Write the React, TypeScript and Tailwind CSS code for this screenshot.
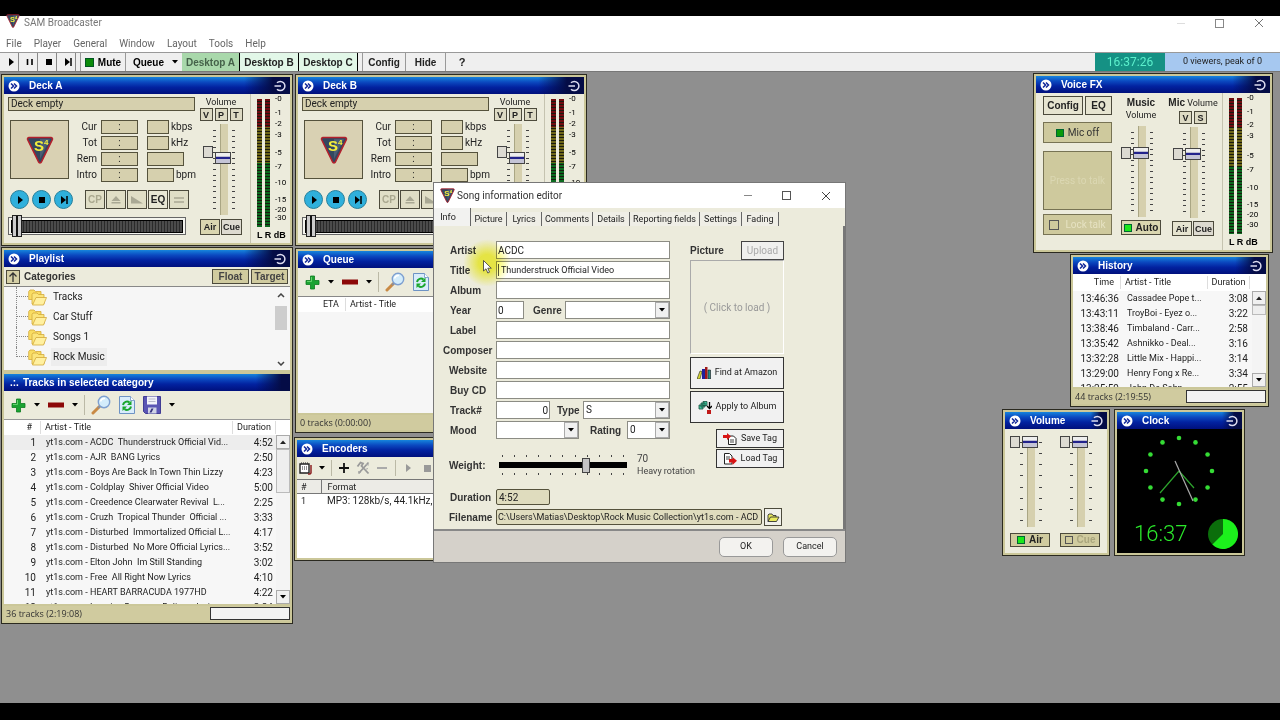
import type {ReactNode} from 'react';
import clsx from 'clsx';

type Children = {children?: ReactNode};

const tracks = [
  ['yt1s.com - ACDC  Thunderstruck Official Vid...', '4:52'],
  ['yt1s.com - AJR  BANG Lyrics', '2:50'],
  ['yt1s.com - Boys Are Back In Town Thin Lizzy', '4:23'],
  ['yt1s.com - Coldplay  Shiver Official Video', '5:00'],
  ['yt1s.com - Creedence Clearwater Revival  L...', '2:25'],
  ['yt1s.com - Cruzh  Tropical Thunder  Official ...', '3:33'],
  ['yt1s.com - Disturbed  Immortalized Official L...', '4:17'],
  ['yt1s.com - Disturbed  No More Official Lyrics...', '3:52'],
  ['yt1s.com - Elton John  Im Still Standing', '3:02'],
  ['yt1s.com - Free  All Right Now Lyrics', '4:10'],
  ['yt1s.com - HEART BARRACUDA 1977HD', '4:22'],
  ['yt1s.com - Imagine Dragons  Believer Lyrics', '3:24'],
];

const history = [
  ['13:46:36', 'Cassadee Pope t...', '3:08'],
  ['13:43:11', 'TroyBoi - Eyez o...', '3:22'],
  ['13:38:46', 'Timbaland - Carr...', '2:58'],
  ['13:35:42', 'Ashnikko - Deal...', '3:16'],
  ['13:32:28', 'Little Mix - Happi...', '3:14'],
  ['13:29:00', 'Henry Fong x Re...', '3:34'],
  ['13:25:59', 'John De Sohn...', '2:55'],
];

// [label, share of the scale below it]
const dbScale: Array<[string, number]> = [
  ['-0', 14], ['-1', 12], ['-2', 11], ['-3', 19], ['-5', 14], ['-7', 17], ['-10', 17], ['-15', 10], ['-20', 9], ['-30', 9],
];

function Logo({className}: {className: string}) {
  return (
    <svg viewBox="0 0 28 28" className={className} aria-hidden="true">
      <path d="M3 1.5h22a1.5 1.5 0 0 1 1.4 2L15.4 26a1.5 1.5 0 0 1-2.8 0L1.6 3.5A1.5 1.5 0 0 1 3 1.5Z" fill="#33475f" stroke="#b3202c" strokeWidth="1.6" />
      <path d="M14 3h10L14 23Z" fill="#5b6f86" opacity=".55" />
      <text x="8" y="15" fontSize="15" fontWeight="700" fill="#f4ee3c" fontFamily="Liberation Sans, sans-serif">S</text>
      <text x="18" y="9" fontSize="8" fontWeight="700" fill="#f4ee3c" fontFamily="Liberation Sans, sans-serif">4</text>
    </svg>
  );
}

function Caret({className = 'text-black'}: {className?: string}) {
  return (
    <svg viewBox="0 0 6 4" className={clsx('h-1 w-1.5 shrink-0', className)} aria-hidden="true">
      <path d="M0 0h6L3 3.6Z" fill="currentColor" />
    </svg>
  );
}

function PlusIcon() {
  return (
    <svg viewBox="0 0 15 15" className="size-[15px]" aria-hidden="true">
      <path d="M5.5 1h4v4.5H14v4H9.500V14h-4V9.500H1v-4h4.500Z" fill="#1ba332" stroke="#0c7c20" strokeWidth=".8" />
      <path d="M6.500 2v4.500H2" fill="none" stroke="#63d36c" />
    </svg>
  );
}

function MinusIcon() {
  return (
    <svg viewBox="0 0 16 6" className="h-1.5 w-4" aria-hidden="true">
      <path d="M0 .5h16v5H0Z" fill="#8c0808" />
    </svg>
  );
}

function SearchIcon() {
  return (
    <svg viewBox="0 0 20 20" className="size-5" aria-hidden="true">
      <path d="M8.500 11.500 2 18" stroke="#c98a45" strokeWidth="3" strokeLinecap="round" />
      <path d="M9.500 10.500 7 13" stroke="#8b8f9c" strokeWidth="2" />
      <circle cx="13" cy="7" r="5.700" fill="#d3ecfb" stroke="#7d9fd0" strokeWidth="1.400" />
      <path d="M9.500 6.500A4 4 0 0 1 14 3.500" stroke="#fff" strokeWidth="1.500" fill="none" />
    </svg>
  );
}

function RefreshIcon() {
  return (
    <svg viewBox="0 0 16 18" className="h-[18px] w-4" aria-hidden="true">
      <path d="M.5.500h11l4 4v13H.500Z" fill="#d9ecfb" stroke="#6e93c4" />
      <path d="M11.500.500v4h4" fill="#fff" stroke="#6e93c4" strokeWidth=".8" />
      <path d="M4 9a4 4 0 0 1 6.500-2.500" fill="none" stroke="#19a62c" strokeWidth="2" />
      <path d="M12.500 4.500v4.500H8Z" fill="#19a62c" />
      <path d="M12 10.500A4 4 0 0 1 5.500 13" fill="none" stroke="#19a62c" strokeWidth="2" />
      <path d="M3.500 15v-4.500H8Z" fill="#19a62c" />
    </svg>
  );
}

function SaveIcon() {
  return (
    <svg viewBox="0 0 18 18" className="size-[18px]" aria-hidden="true">
      <path d="M.5.500h17v17H2.500l-2-2Z" fill="#5a55b4" stroke="#413c94" />
      <path d="M4 .5h10v8H4Z" fill="#f3f3fa" />
      <path d="M5.500 3h7M5.500 5.500h7" stroke="#b9b9cc" />
      <path d="M5 11.500h8.500v6H5Z" fill="#cfd3e6" />
      <path d="M10.500 12.500h-2l-2 4h2Z" fill="#34307c" />
    </svg>
  );
}

function FolderIcon() {
  return (
    <svg viewBox="0 0 19 17" className="h-[17px] w-[19px]" aria-hidden="true">
      <path d="M.7 2.500 2 1h4l1.500 1.500H13v8H.7Z" fill="#f9dd62" stroke="#d3a93a" strokeWidth=".8" />
      <path d="M4 5.500 5 4h4l1.500 1.500h5.500V15H4Z" fill="#fbe57c" stroke="#d3a93a" strokeWidth=".8" />
      <path d="M4.500 16 8 8.500h10.500L15.500 16Z" fill="#fff0a0" stroke="#d3a93a" strokeWidth=".8" />
    </svg>
  );
}

function PlayShape() {
  return <svg viewBox="0 0 10 10" className="size-2.5" aria-hidden="true"><path d="M3 1v8l5-4Z" fill="#000" /></svg>;
}
function PauseShape() {
  return <svg viewBox="0 0 10 10" className="size-2.5" aria-hidden="true"><path d="M2.500 2v6M7 2v6" stroke="#000" strokeWidth="1.600" /></svg>;
}
function StopShape() {
  return <svg viewBox="0 0 10 10" className="size-2.5" aria-hidden="true"><path d="M2 2h6v6H2Z" fill="#000" /></svg>;
}
function NextShape() {
  return <svg viewBox="0 0 10 10" className="size-2.5" aria-hidden="true"><path d="M2 1v8l5-4Z" fill="#000" /><path d="M8 1v8" stroke="#000" strokeWidth="1.500" /></svg>;
}

function TitleBar({title}: {title: string}) {
  return (
    <header className="flex h-[17px] shrink-0 items-center bg-[linear-gradient(90deg,transparent_84%,#040c46_94%),linear-gradient(180deg,#1684dc,#0b49c0_30%,#0222a0_60%,#00107c)] px-1 text-white">
      <svg viewBox="0 0 12 12" className="size-3" aria-hidden="true">
        <circle cx="6" cy="6" r="5.500" fill="#fff" />
        <path d="m3 3.500 2.500 2.500L3 8.500M6 3.500 8.500 6 6 8.500" fill="none" stroke="#12289a" strokeWidth="1.500" />
      </svg>
      <h2 className="ml-[9px] flex-1 font-['Liberation_Sans',sans-serif] text-[10px] leading-4 font-bold">{title}</h2>
      <button aria-label={`Dock ${title}`}>
        <svg viewBox="0 0 12 12" className="size-3 text-[#dcdcf0]" aria-hidden="true">
          <path d="M3 2.800a4.600 4.600 0 1 1 0 6.400M.5 6H7" fill="none" stroke="currentColor" strokeWidth="1.500" />
        </svg>
      </button>
    </header>
  );
}

function Panel({title, className, children}: Children & {title: string; className: string}) {
  return (
    <section className={clsx('absolute flex flex-col border border-[#2b2a20] bg-[#cbc799] p-0.5', className)}>
      <TitleBar title={title} />
      {children}
    </section>
  );
}

function Btn({children, className, label}: Children & {className?: string; label?: string}) {
  return (
    <button
      aria-label={label}
      className={clsx("flex shrink-0 items-center justify-center border border-[#4c4a3c] font-['Liberation_Sans',sans-serif] leading-3 font-bold", className)}
    >
      {children}
    </button>
  );
}

function Ticks({count}: {count: number}) {
  return (
    <div className="flex w-[3px] flex-col justify-between py-1.5">
      {Array.from({length: count}, (_, i) => <span key={i} className="h-px bg-[#444]" />)}
    </div>
  );
}

function VSlider({label, value, ticks = 15, knob}: {label: string; value: number; ticks?: number; knob: string}) {
  return (
    <div className="flex h-[91px] gap-1">
      <button aria-label={`Reset ${label}`} className={clsx('-mr-1 h-3 w-2.5 border border-[#444] bg-[#dcdad2]', knob)} />
      <Ticks count={ticks} />
      <input
        type="range"
        aria-label={label}
        defaultValue={value}
        className="relative h-full w-2 appearance-none border-l border-[#aaa684] bg-[#d6d0ae] [direction:rtl] [writing-mode:vertical-lr] [&::-webkit-slider-thumb]:-ml-1 [&::-webkit-slider-thumb]:h-3 [&::-webkit-slider-thumb]:w-4 [&::-webkit-slider-thumb]:appearance-none [&::-webkit-slider-thumb]:border [&::-webkit-slider-thumb]:border-[#444] [&::-webkit-slider-thumb]:bg-[linear-gradient(180deg,#eee_0_3px,#bcbcd0_3px_4px,#22228c_4px_6px,#c4c4d6_6px)]"
      />
      <Ticks count={ticks} />
    </div>
  );
}

function Meter() {
  return (
    <div className="flex w-10 shrink-0 flex-col border-l border-[#c5c3b0] pt-[5px] pl-1.5 text-black">
      <div className="flex flex-1 gap-[3px]">
        {['L', 'R'].map((ch) => (
          <div key={ch} className="w-[5px] bg-[repeating-linear-gradient(180deg,transparent_0_2px,#1a1a10_2px_3px),linear-gradient(180deg,#700c10_0_22%,#6e6618_22%_50%,#0c6a20_50%)]" />
        ))}
        <div className="ml-0.5 flex flex-col text-[8px] leading-none">
          {dbScale.map(([text, share]) => (
            <span key={text} className="h-0" style={{flexGrow: share}}><span className="block -translate-y-1">{text}</span></span>
          ))}
        </div>
      </div>
      <div className="mt-0.5 mb-0.5 font-['Liberation_Sans',sans-serif] text-[9px] leading-3 font-bold whitespace-nowrap">L R dB</div>
    </div>
  );
}

function Field({className, children}: Children & {className: string}) {
  return <span className={clsx('flex h-3.5 items-center justify-center border border-[#55523c] bg-[#d6d0ae]', className)}>{children}</span>;
}

function Deck({name, className}: {name: string; className: string}) {
  const rows: Array<[string, string, string]> = [
    ['Cur', 'w-[22px]', 'kbps'],
    ['Tot', 'w-[22px]', 'kHz'],
    ['Rem', 'w-[37px]', ''],
    ['Intro', 'w-[27px]', 'bpm'],
  ];
  return (
    <Panel title={name} className={clsx('h-[172px] w-[292px]', className)}>
      <div className="flex flex-1 bg-[#ecebdc] text-[#222]">
        <div className="flex w-48 flex-col pt-[3px] pl-1">
          <div className="h-3.5 w-[187px] border border-[#55523c] bg-[#d6d0ae] px-0.5 text-[10px] leading-3">Deck empty</div>
          <div className="mt-[9px] flex pl-0.5">
            <div className="flex size-[59px] items-center justify-center border border-[#55523c] bg-[#d9d1b3]">
              <Logo className="size-7" />
            </div>
            <div className="flex flex-1 flex-col gap-0.5">
              {rows.map(([label, width, unit]) => (
                <div key={label} className="flex items-center text-[10px] leading-3">
                  <span className="mr-1 w-7 text-right">{label}</span>
                  <Field className="mr-[9px] w-[37px]">:</Field>
                  <Field className={width} />
                  <span className="ml-0.5">{unit}</span>
                </div>
              ))}
            </div>
          </div>
          <div className="mt-2 flex items-center gap-[3px] pl-0.5">
            {[PlayShape, StopShape, NextShape].map((Shape, i) => (
              <button key={i} aria-label={['Play', 'Stop', 'Next'][i]} className="flex size-[19px] items-center justify-center rounded-full border border-[#26809c] bg-[#2fb0dc]">
                <Shape />
              </button>
            ))}
            <div className="ml-[9px] flex gap-px">
              <Btn className="h-[19px] w-5 bg-[#e0dec6] text-[10px] text-[#aaa88f]">CP</Btn>
              <Btn label="Eject" className="h-[19px] w-5 bg-[#e0dec6]">
                <svg viewBox="0 0 10 8" className="h-2 w-2.5"><path d="M5 0 9.500 5h-9ZM.5 6h9v1.500h-9Z" fill="#a9a894" /></svg>
              </Btn>
              <Btn label="Fade" className="h-[19px] w-5 bg-[#e0dec6]">
                <svg viewBox="0 0 12 8" className="h-2 w-3"><path d="M0 0l12 7.500H0Z" fill="#a9a894" /></svg>
              </Btn>
              <Btn className="h-[19px] w-5 bg-[#e8e7d4] text-[10px]">EQ</Btn>
              <Btn label="Sync" className="h-[19px] w-5 bg-[#e0dec6]">
                <svg viewBox="0 0 10 6" className="h-1.5 w-2.5"><path d="M0 1h10M0 5h10" stroke="#a9a894" strokeWidth="1.600" /></svg>
              </Btn>
            </div>
          </div>
          <div className="mt-2 flex h-[18px] w-[178px] items-center border border-[#666] bg-[#f4f4ee] px-0.5">
            <input
              type="range"
              aria-label={`${name} position`}
              defaultValue={0}
              className="h-[13px] w-full appearance-none border border-black bg-[repeating-linear-gradient(90deg,#4b4b4b_0_2px,#2a2a2a_2px_3px)] [&::-webkit-slider-thumb]:h-[22px] [&::-webkit-slider-thumb]:w-2.5 [&::-webkit-slider-thumb]:appearance-none [&::-webkit-slider-thumb]:border [&::-webkit-slider-thumb]:border-[#222] [&::-webkit-slider-thumb]:bg-[linear-gradient(90deg,#ccc_0_3px,#111_3px_5px,#ccc_5px)]"
            />
          </div>
        </div>
        <div className="flex flex-1 flex-col items-center pt-0.5 pr-1 text-[#222]">
          <span className="leading-3">Volume</span>
          <div className="flex gap-0.5">
            {['V', 'P', 'T'].map((k) => <Btn key={k} className="size-[13px] bg-[#dddac4] text-[9px]">{k}</Btn>)}
          </div>
          <div className="mt-[3px] pr-1"><VSlider label={`${name} volume`} value={65} knob="mt-[22px]" /></div>
          <div className="mt-1 flex gap-px">
            <Btn className="h-4 w-5 bg-[#dad6b0] text-[9px]">Air</Btn>
            <Btn className="h-4 w-[21px] bg-[#dddad0] text-[9px]">Cue</Btn>
          </div>
        </div>
        <Meter />
      </div>
    </Panel>
  );
}

function ListTools({save}: {save?: boolean}) {
  return (
    <div className="flex h-7 shrink-0 items-center bg-[#ecebdc] pl-[7px]">
      <button aria-label="Add"><PlusIcon /></button>
      <button aria-label="Add options" className="ml-2"><Caret /></button>
      <button aria-label="Remove" className="ml-2"><MinusIcon /></button>
      <button aria-label="Remove options" className="ml-2"><Caret /></button>
      <span className="ml-1.5 h-5 border-l border-[#bbb9a6]" />
      <button aria-label="Search" className="ml-1.5"><SearchIcon /></button>
      <button aria-label="Refresh" className="ml-2"><RefreshIcon /></button>
      {save && (
        <>
          <button aria-label="Save" className="ml-2"><SaveIcon /></button>
          <button aria-label="Save options" className="ml-2"><Caret /></button>
        </>
      )}
    </div>
  );
}

function ScrollBar({thumb}: {thumb: string}) {
  return (
    <div className="flex w-3.5 shrink-0 flex-col bg-[#f4f4f4]">
      <button aria-label="Scroll up" className="flex h-3.5 items-center justify-center border border-[#aaa] bg-[#f0f0f0]"><Caret className="rotate-180" /></button>
      <div className={clsx('border border-[#bbb] bg-[#eee]', thumb)} />
      <button aria-label="Scroll down" className="mt-auto flex h-3.5 items-center justify-center border border-[#aaa] bg-[#f0f0f0]"><Caret /></button>
    </div>
  );
}

function StatusBar({text, box}: {text: string; box?: string}) {
  return (
    <div className="mt-0.5 flex h-[15px] shrink-0 items-center bg-[#d0cb9f] pl-0.5 font-['Open_Sans',sans-serif] text-[9px] text-[#333]">
      <span className="flex-1">{text}</span>
      {box && <span className={clsx('h-[13px] border border-[#333] bg-[#f3f3f3]', box)} />}
    </div>
  );
}

function Playlist() {
  return (
    <Panel title="Playlist" className="top-[175px] left-px h-[377px] w-[292px]">
      <div className="flex h-[19px] shrink-0 items-center bg-[#ecebdc] px-0.5">
        <Btn label="Up" className="size-3.5 bg-[#d6d0a6]">
          <svg viewBox="0 0 10 10" className="size-2.5"><path d="M5 10V1M1.500 4.500 5 1l3.500 3.500" fill="none" stroke="#333" strokeWidth="1.300" /></svg>
        </Btn>
        <span className="ml-1 flex-1 font-['Liberation_Sans',sans-serif] text-[10px] font-bold text-[#333]">Categories</span>
        <Btn className="h-[15px] w-[37px] bg-[#d0cb9f] text-[10px] text-[#444]">Float</Btn>
        <Btn className="ml-0.5 h-[15px] w-[37px] bg-[#d0cb9f] text-[10px] text-[#444]">Target</Btn>
      </div>
      <div className="flex h-[84px] shrink-0 border-t border-[#888] bg-[#f6f6f6]">
        <ul className="flex-1 overflow-hidden pl-3">
          {['Tracks', 'Car Stuff', 'Songs 1', 'Rock Music'].map((name, i) => (
            <li key={name} className="flex h-5 items-center">
              <span className={clsx('w-3 border-l border-dotted border-[#888]', i === 3 ? 'h-2.5 self-start border-b' : 'h-5')}>
                {i !== 3 && <span className="block h-2.5 border-b border-dotted border-[#888]" />}
              </span>
              <FolderIcon />
              <span className={clsx('ml-1 px-0.5 text-[10px] leading-[18px]', i === 3 && 'bg-[#ededed]')}>{name}</span>
            </li>
          ))}
        </ul>
        <div className="flex w-[18px] flex-col items-center py-1 text-[#444]">
          <svg viewBox="0 0 8 5" className="mt-0.5 h-[5px] w-2"><path d="m1 4 3-3 3 3" fill="none" stroke="currentColor" strokeWidth="1.500" /></svg>
          <div className="mt-2 h-6 w-3 bg-[#cdcdcd]" />
          <svg viewBox="0 0 8 5" className="mt-auto h-[5px] w-2"><path d="m1 1 3 3 3-3" fill="none" stroke="currentColor" strokeWidth="1.500" /></svg>
        </div>
      </div>
      <h2 className="mt-1 flex h-[17px] shrink-0 items-center bg-[linear-gradient(90deg,transparent_88%,#040c46_97%),linear-gradient(180deg,#1684dc,#0b49c0_30%,#0222a0_60%,#00107c)] pl-1.5 font-['Liberation_Sans',sans-serif] text-[10px] font-bold text-white">
        <span className="mr-1">.:.</span>Tracks in selected category
      </h2>
      <ListTools save />
      <div className="flex flex-1 flex-col overflow-hidden bg-[#f7f7f7]">
        <div className="flex h-4 shrink-0 items-center border-t border-[#999] bg-white">
          <span className="w-[30px] pr-0.5 text-right">#</span>
          <span className="ml-1.5 flex-1 border-l border-[#ddd] pl-1">Artist - Title</span>
          <span className="mr-3.5 w-11 border-x border-[#ddd] text-center">Duration</span>
        </div>
        <div className="flex flex-1 overflow-hidden">
          <div className="h-0 flex-1">
            <table className="w-full table-fixed border-collapse">
              <tbody>
                {tracks.map(([title, time], i) => (
                  <tr key={title} className={clsx('h-[15px] leading-[15px]', i === 0 && 'bg-[#ededed]')}>
                    <td className="w-8 text-right text-[10px]">{i + 1}</td>
                    <td className="pl-2.5 whitespace-pre">{title}</td>
                    <td className="w-8 pr-[3px] text-right text-[10px]">{time}</td>
                  </tr>
                ))}
              </tbody>
            </table>
          </div>
          <ScrollBar thumb="h-11" />
        </div>
      </div>
      <StatusBar text="36 tracks (2:19:08)" box="w-20" />
    </Panel>
  );
}

function Queue() {
  return (
    <Panel title="Queue" className="top-44 left-[295px] h-[185px] w-[292px]">
      <ListTools save />
      <div className="flex-1 border-t border-[#888] bg-[#f6f6f6]">
        <div className="flex h-[15px] items-center bg-white">
          <span className="w-[41px] text-right">ETA</span>
          <span className="ml-1.5 border-l border-[#ddd] pl-1">Artist - Title</span>
        </div>
      </div>
      <StatusBar text="0 tracks (0:00:00)" />
    </Panel>
  );
}

function Encoders() {
  return (
    <Panel title="Encoders" className="top-[365px] left-[294px] h-[124px] w-[292px]">
      <div className="flex h-[22px] shrink-0 items-center bg-[#ecebdc] pl-0.5 text-[#999]">
        <button aria-label="Schedule">
          <svg viewBox="0 0 14 13" className="h-[13px] w-3.5"><path d="M1 2h9v9H1Z" fill="#fff" stroke="#222" strokeWidth="1.400" /><path d="M2 1h8M3 5h5M3 7h5" stroke="#222" strokeDasharray="1 1" /><path d="M12 3v8l-1 1H9" fill="none" stroke="#8c2020" strokeWidth="1.500" /></svg>
        </button>
        <button aria-label="Schedule options" className="ml-1.5"><Caret /></button>
        <span className="ml-1.5 h-4 border-l border-[#bbb9a6]" />
        <button aria-label="Add encoder" className="ml-[7px]">
          <svg viewBox="0 0 10 10" className="size-2.5"><path d="M5 0v10M0 5h10" stroke="#111" strokeWidth="1.800" /></svg>
        </button>
        <button aria-label="Encoder settings" className="ml-[7px]">
          <svg viewBox="0 0 14 14" className="size-3.5"><path d="M1.500 5.500 4.500 1.500l2.500 1L5.500 5l7 7.500M12.500 1.500l-10 11" fill="none" stroke="#999" strokeWidth="1.800" /><path d="M10 3.500 13 4M2 10.500l3 1M9 8.500l3-1" stroke="#aaa" /></svg>
        </button>
        <button aria-label="Remove encoder" className="ml-[7px] h-0.5 w-2.5 bg-[#aaa]" />
        <span className="ml-2 h-4 border-l border-[#bbb9a6]" />
        <button aria-label="Start" className="ml-2.5"><svg viewBox="0 0 6 8" className="h-2 w-1.5"><path d="M0 0v8l5-4Z" fill="#999" /></svg></button>
        <button aria-label="Stop" className="ml-3 size-[7px] bg-[#999]" />
      </div>
      <table className="w-full border-collapse">
        <thead>
          <tr className="h-3.5 border-y border-[#777] bg-[#ecebe6] text-left leading-3">
            <th className="w-6 border-r border-[#777] pl-1 font-normal">#</th>
            <th className="pl-1.5 font-normal">Format</th>
          </tr>
        </thead>
        <tbody>
          <tr className="h-[15px] bg-white"><td className="pl-1 leading-[14px]">1</td><td className="pl-1.5 text-[10px] leading-[14px]">MP3: 128kb/s, 44.1kHz, Stereo</td></tr>
        </tbody>
      </table>
      <div className="flex-1 bg-white" />
    </Panel>
  );
}

function VoiceFx() {
  return (
    <Panel title="Voice FX" className="top-px right-[7px] h-[180px] w-[240px]">
      <div className="flex flex-1 bg-[#ecebdc]">
        <div className="ml-[7px] flex w-[69px] flex-col pt-[3px]">
          <div className="flex gap-0.5">
            <Btn className="h-[19px] w-10 bg-[#e6e4d0] text-[10px]">Config</Btn>
            <Btn className="h-[19px] w-[27px] bg-[#e6e4d0] text-[10px]">EQ</Btn>
          </div>
          <button className="mt-[7px] flex h-[21px] items-center justify-center gap-1 border border-[#777354] bg-[#cec99d] text-[10px] text-[#333]">
            <span className="size-2 border border-[#063] bg-[#0a9a0a]" />Mic off
          </button>
          <button className="mt-2 h-[59px] border border-[#777354] bg-[#cec99d] text-[10px] text-[#dbd7b2]">Press to talk</button>
          <label className="mt-1 flex h-[21px] items-center justify-center gap-1.5 border border-[#777354] bg-[#cec99d] text-[10px] text-[#e6e2c2]">
            <input type="checkbox" className="size-2.5 appearance-none border border-[#555]" />Lock talk
          </label>
        </div>
        <div className="ml-1.5 flex w-[46px] flex-col items-center pt-[3px]">
          <span className="font-['Liberation_Sans',sans-serif] text-[10px] leading-[13px] font-bold">Music</span>
          <span className="leading-3">Volume</span>
          <div className="mt-[5px] pr-2"><VSlider label="Music volume" value={74} knob="mt-[21px]" /></div>
          <Btn className="mt-[3px] h-[15px] w-10 gap-1 bg-[#dad6b0] text-[10px]"><span className="size-2 border border-[#063] bg-[#1be81b]" />Auto</Btn>
        </div>
        <div className="ml-1 flex w-[50px] flex-col items-center pt-[3px]">
          <span className="leading-[13px] whitespace-nowrap"><b className="font-['Liberation_Sans',sans-serif] text-[10px]">Mic</b> Volume</span>
          <div className="mt-px flex gap-0.5">
            <Btn className="size-[13px] bg-[#dddac4] text-[9px]">V</Btn>
            <Btn className="size-[13px] bg-[#dddac4] text-[9px]">S</Btn>
          </div>
          <div className="mt-[3px] pr-2"><VSlider label="Mic volume" value={74} knob="mt-[21px]" /></div>
          <div className="mt-[3px] flex gap-px">
            <Btn className="h-[15px] w-5 bg-[#e6e4d0] text-[9px]">Air</Btn>
            <Btn className="h-[15px] w-[21px] bg-[#dddad0] text-[9px]">Cue</Btn>
          </div>
        </div>
        <div className="ml-auto flex pr-2"><Meter /></div>
      </div>
    </Panel>
  );
}

function History() {
  return (
    <Panel title="History" className="top-[182px] right-[11px] h-[153px] w-[199px]">
      <div className="flex flex-1 flex-col overflow-hidden bg-[#f7f7f7]">
        <div className="flex h-[17px] shrink-0 items-center bg-white">
          <span className="w-[41px] text-right">Time</span>
          <span className="ml-1.5 flex-1 border-l border-[#ddd] pl-1">Artist - Title</span>
          <span className="mr-4 w-[43px] border-x border-[#ddd] text-center">Duration</span>
        </div>
        <div className="flex flex-1 overflow-hidden">
          <div className="h-0 flex-1">
            <table className="w-full table-fixed border-collapse">
              <tbody>
                {history.map(([time, title, length]) => (
                  <tr key={time} className="h-[15px] leading-[15px]">
                    <td className="w-[46px] text-right text-[10px]">{time}</td>
                    <td className="pl-2 whitespace-nowrap">{title}</td>
                    <td className="w-8 pr-1 text-right text-[10px]">{length}</td>
                  </tr>
                ))}
              </tbody>
            </table>
          </div>
          <ScrollBar thumb="h-2.5" />
        </div>
      </div>
      <StatusBar text="44 tracks (2:19:55)" box="w-20" />
    </Panel>
  );
}

function VolumePanel() {
  return (
    <Panel title="Volume" className="top-[337px] right-[170px] h-[147px] w-[108px]">
      <div className="flex flex-1 gap-2.5 bg-[#ecebdc] px-[5px] pt-[7px]">
        <div className="flex flex-col">
          <VSlider label="Air volume" value={100} ticks={8} knob="" />
          <Btn className="mt-1.5 h-3.5 w-10 gap-1 bg-[#d0cb9f] text-[10px]"><span className="size-2 border border-[#063] bg-[#1be81b]" />Air</Btn>
        </div>
        <div className="flex flex-col">
          <VSlider label="Cue volume" value={100} ticks={8} knob="" />
          <Btn className="mt-1.5 h-3.5 w-10 gap-1 bg-[#d0cb9f] text-[10px] text-[#aaa67e]"><span className="size-2 border border-[#555]" />Cue</Btn>
        </div>
      </div>
    </Panel>
  );
}

function Clock() {
  const dots = Array.from({length: 12}, (_, i) => (i * Math.PI) / 6);
  return (
    <Panel title="Clock" className="top-[337px] right-[35px] h-[147px] w-[131px]">
      <div className="flex flex-1 flex-col bg-black">
        <svg viewBox="0 0 125 86" className="h-[86px] w-full" aria-label="Analog clock">
          {dots.map((a) => <circle key={a} cx={62 + 33 * Math.sin(a)} cy={42 - 33 * Math.cos(a)} r="2.300" fill="#35dc35" />)}
          <path d="M62 42 43 64M62 42 77 59" stroke="#2da32d" strokeWidth="1.200" />
          <path d="M58 32 76 72" stroke="#aaa" strokeWidth="1.200" />
        </svg>
        <div className="flex flex-1 items-center justify-between pr-1 pl-[17px]">
          <time className="font-['Roboto',sans-serif] text-[22px] leading-7 font-light text-[#2ae82a]">16:37</time>
          <svg viewBox="0 0 30 30" className="size-[30px]" aria-hidden="true">
            <circle cx="15" cy="15" r="15" fill="#0b6e0b" />
            <path d="M15 15V0a15 15 0 1 1-10.600 25.600Z" fill="#1cf01c" />
          </svg>
        </div>
      </div>
    </Panel>
  );
}

function FormRow({label, id, pad = 'pl-4', children}: Children & {label: string; id: string; pad?: string}) {
  return (
    <div className="flex h-5 items-center">
      <label htmlFor={id} className={clsx("w-[62px] shrink-0 font-['Liberation_Sans',sans-serif] text-[10px] font-bold text-[#333]", pad)}>{label}</label>
      {children}
    </div>
  );
}

const box = 'h-[18px] min-w-0 border border-[#8c8c84] bg-white px-px leading-4 text-[#222]';
const bold = "font-['Liberation_Sans',sans-serif] text-[10px] font-bold text-[#333]";

function Select({id, value = '', className}: {id: string; value?: string; className: string}) {
  return (
    <span className={clsx('grid', className)}>
      <select id={id} defaultValue={value} className={clsx(box, 'col-start-1 row-start-1 appearance-none pl-0.5 text-[10px]')}>
        <option>{value}</option>
      </select>
      <span className="pointer-events-none col-start-1 row-start-1 m-px flex w-3.5 items-center justify-center justify-self-end border border-[#aaa] bg-[#f0f0f0]"><Caret /></span>
    </span>
  );
}

function WeightTicks() {
  return (
    <div className="flex justify-between px-[3px]">
      {Array.from({length: 11}, (_, i) => <span key={i} className="h-0.5 w-px bg-[#444]" />)}
    </div>
  );
}

function SongEditor() {
  return (
    <section role="dialog" aria-label="Song information editor" className="absolute top-[110px] left-[433px] flex h-[381px] w-[413px] flex-col border border-[#777] bg-[#ecebdc]">
      <header className="flex h-[25px] shrink-0 items-center bg-white pr-3.5 pl-1.5">
        <Logo className="size-[15px]" />
        <h2 className="ml-0.5 flex-1 font-['Roboto',sans-serif] text-[10px] text-[#333]">Song information editor</h2>
        <div className="flex items-center gap-[30px] text-[#444]">
          <button aria-label="Minimize" className="h-px w-2 bg-[#888]" />
          <button aria-label="Maximize" className="size-[9px] border border-[#555]" />
          <button aria-label="Close"><svg viewBox="0 0 10 10" className="size-2.5"><path d="m1 1 8 8M9 1 1 9" stroke="currentColor" /></svg></button>
        </div>
      </header>
      <div role="tablist" className="flex h-[18px] shrink-0 items-end leading-[15px] text-[#222]">
        <button role="tab" aria-selected="true" className="h-[18px] w-[37px] border-r border-[#666] bg-[#f2f2f0] pr-2 text-center">Info</button>
        {[['Picture', 'w-9'], ['Lyrics', 'w-[35px]'], ['Comments', 'w-[51px]'], ['Details', 'w-[37px]'], ['Reporting fields', 'w-[70px]'], ['Settings', 'w-[42px]'], ['Fading', 'w-[37px]']].map(([tab, width]) => (
          <button key={tab} role="tab" className={clsx('h-3.5 border-r border-[#666] bg-[#efeee6] text-center leading-3 whitespace-nowrap', width)}>{tab}</button>
        ))}
      </div>
      <form className="flex flex-1 gap-5 border-r-2 border-[#777] pt-3.5" onSubmit={(e) => e.preventDefault()}>
        <div className="w-[236px]">
          <FormRow label="Artist" id="artist"><input id="artist" defaultValue="ACDC" className={clsx(box, 'flex-1 text-[10px]')} /></FormRow>
          <FormRow label="Title" id="title">
            <span className={clsx(box, 'flex flex-1 items-center')}>
              <span className="h-3 w-px shrink-0 bg-[#555]" />
              <input id="title" defaultValue="Thunderstruck Official Video" className="ml-0.5 min-w-0 flex-1" />
            </span>
          </FormRow>
          <FormRow label="Album" id="album"><input id="album" className={clsx(box, 'flex-1')} /></FormRow>
          <FormRow label="Year" id="year">
            <input id="year" defaultValue="0" className={clsx(box, 'w-7 text-[10px]')} />
            <label htmlFor="genre" className={clsx(bold, 'ml-[9px] w-8')}>Genre</label>
            <Select id="genre" className="flex-1" />
          </FormRow>
          <FormRow label="Label" id="label"><input id="label" className={clsx(box, 'flex-1')} /></FormRow>
          <FormRow label="Composer" id="composer" pad="pl-[9px]"><input id="composer" className={clsx(box, 'flex-1')} /></FormRow>
          <FormRow label="Website" id="website" pad="pl-[15px]"><input id="website" className={clsx(box, 'flex-1')} /></FormRow>
          <FormRow label="Buy CD" id="buycd"><input id="buycd" className={clsx(box, 'flex-1')} /></FormRow>
          <FormRow label="Track#" id="track">
            <input id="track" defaultValue="0" className={clsx(box, 'w-[54px] text-right text-[10px]')} />
            <label htmlFor="type" className={clsx(bold, 'ml-[7px] w-[26px]')}>Type</label>
            <Select id="type" value="S" className="flex-1" />
          </FormRow>
          <FormRow label="Mood" id="mood">
            <Select id="mood" className="w-[83px]" />
            <label htmlFor="rating" className={clsx(bold, 'ml-[11px] w-[37px]')}>Rating</label>
            <Select id="rating" value="0" className="flex-1" />
          </FormRow>
          <div className="mt-[9px] flex items-center">
            <label htmlFor="weight" className={clsx(bold, 'w-[65px] shrink-0 pl-[15px]')}>Weight:</label>
            <div className="w-32 shrink-0 py-1.5">
              <WeightTicks />
              <input
                id="weight"
                type="range"
                defaultValue={69}
                className="my-[5px] block h-1.5 w-full appearance-none bg-black [&::-webkit-slider-thumb]:h-[15px] [&::-webkit-slider-thumb]:w-2 [&::-webkit-slider-thumb]:appearance-none [&::-webkit-slider-thumb]:border [&::-webkit-slider-thumb]:border-[#444] [&::-webkit-slider-thumb]:bg-[#c4c4c4]"
              />
              <WeightTicks />
            </div>
            <p className="ml-2.5 leading-3 whitespace-nowrap text-[#444]"><span className="text-[10px]">70</span><br />Heavy rotation</p>
          </div>
          <div className="mt-1.5 w-[352px]">
            <FormRow label="Duration" id="duration"><input id="duration" readOnly defaultValue="4:52" className="h-4 w-[54px] rounded-xs border border-[#55523c] bg-[#dfdcbe] px-0.5 text-[10px] leading-3" /></FormRow>
            <FormRow label="Filename" id="filename" pad="pl-[15px]">
              <input id="filename" readOnly defaultValue="C:\Users\Matias\Desktop\Rock Music Collection\yt1s.com - ACD" className="h-4 w-[266px] rounded-xs border border-[#55523c] bg-[#dfdcbe] px-px leading-3" />
              <Btn label="Browse" className="ml-0.5 size-[18px] bg-[#f0f0ea]">
                <svg viewBox="0 0 13 9" className="h-[9px] w-[13px]"><path d="M1 8.500V2l1-1h3l1 1.500h3V4M1 8.500 3.500 4H12L9.500 8.500Z" fill="#e9ea5c" stroke="#333" strokeWidth=".9" /></svg>
              </Btn>
            </FormRow>
          </div>
        </div>
        <div className="flex w-[94px] flex-col pt-px text-[#222]">
          <div className="flex items-center justify-between">
            <span className={bold}>Picture</span>
            <button className="h-[19px] w-[43px] border border-[#444] bg-[#f0f0ee] text-[10px] text-[#aaa]">Upload</button>
          </div>
          <button className="h-[94px] border border-t-[#aaa] border-r-white border-b-white border-l-[#aaa] text-[10px] text-[#999]">( Click to load )</button>
          <button className="mt-[3px] flex h-8 items-center justify-center gap-1 border border-[#333] bg-[#f1f1f1] whitespace-nowrap">
            <svg viewBox="0 0 14 12" className="h-3 w-3.5"><path d="m0 12 3-8 2 .5-2 7.500Z" fill="#d8d834" stroke="#222" strokeWidth=".6" /><path d="M5 2h3v10H5Z" fill="#20209c" /><path d="M8 0h2.500v12H8Z" fill="#a01818" /><path d="M11 3h2.500v9H11Z" fill="#258c8c" stroke="#111" strokeWidth=".6" /></svg>
            Find at Amazon
          </button>
          <button className="mt-0.5 flex h-8 items-center justify-center gap-1 border border-[#333] bg-[#f1f1f1] whitespace-nowrap">
            <svg viewBox="0 0 14 13" className="h-[13px] w-3.5"><path d="M1 4h4v4H1ZM3 2h4v4H3ZM5 .5h4v4H5Z" fill="#3cc49c" stroke="#164c3c" strokeWidth=".8" /><path d="M11.500 1v6M9 5l2.500 2.500L14 5" fill="none" stroke="#000" strokeWidth="1.300" /><path d="M9 9h4v4H9Z" fill="#c01818" /></svg>
            Apply to Album
          </button>
          <button className="mt-1.5 ml-auto flex h-[19px] w-[68px] items-center justify-center gap-1 border border-[#333] bg-[#f1f1f1]">
            <svg viewBox="0 0 14 12" className="h-3 w-3.5"><path d="M5.500 3h5l2.500 2.500v6H5.500Z" fill="#fff" stroke="#222" /><path d="M7 7h4M7 9h4" stroke="#444" /><path d="M0 2h4V0l4 3.500L4 7V5H0Z" fill="#d81414" /></svg>
            Save Tag
          </button>
          <button className="mt-px ml-auto flex h-[19px] w-[68px] items-center justify-center gap-1 border border-[#333] bg-[#f1f1f1]">
            <svg viewBox="0 0 14 12" className="h-3 w-3.5"><path d="M1.500.500h5L9 3v8H1.500Z" fill="#fff" stroke="#222" /><path d="M3 4h4M3 6h4" stroke="#444" /><path d="M6 6h3.500V4l4.500 3.800L9.500 12v-2.500H6Z" fill="#d81414" /></svg>
            Load Tag
          </button>
        </div>
      </form>
      <footer className="flex h-[33px] shrink-0 items-center justify-end gap-2.5 border-t-2 border-[#888] bg-[#d5d1ca] pr-2">
        <button className="h-5 w-[54px] rounded-[5px] border border-[#999] bg-[#f3f2ef] text-[#222]">OK</button>
        <button className="h-5 w-[54px] rounded-[5px] border border-[#999] bg-[#f3f2ef] text-[#222]">Cancel</button>
      </footer>
      <div className="pointer-events-none absolute top-14 left-[29px] size-12 rounded-full bg-[radial-gradient(circle,#f8f850_25%,transparent_70%)] mix-blend-multiply" />
      <svg viewBox="0 0 9 14" className="pointer-events-none absolute top-[77px] left-[49px] h-3.5 w-[9px]" aria-hidden="true">
        <path d="M.5.500v10.500L3 8.800 4.800 13l1.700-.8L4.800 8.200H8.300Z" fill="#fff" stroke="#333" strokeWidth=".8" />
      </svg>
    </section>
  );
}

function Toolbar() {
  return (
    <div className="flex h-5 shrink-0 items-stretch border-t border-b border-t-[#999] border-b-[#777] bg-[#efefef] font-['Liberation_Sans',sans-serif] text-[10px] font-bold text-[#222]">
      {[PlayShape, PauseShape, StopShape, NextShape].map((Shape, i) => (
        <button key={i} aria-label={['Play', 'Pause', 'Stop', 'Next'][i]} className="flex w-[19px] items-center justify-center border-r border-[#888] pl-1"><Shape /></button>
      ))}
      <button className="ml-1 flex w-[46px] items-center justify-center gap-1 border-x border-[#999] text-black"><span className="size-[9px] border border-[#052] bg-[#0a8a0a]" />Mute</button>
      <button className="flex w-14 items-center justify-end gap-2 pr-1 text-black">Queue<Caret /></button>
      <button className="w-[58px] border-r border-black bg-[#a9d8ab] text-[#45624a]">Desktop A</button>
      <button className="w-[59px] border-r border-black bg-[#e2f7e8]">Desktop B</button>
      <button className="w-[59px] border-r border-black bg-[#e2f7e8]">Desktop C</button>
      <button className="ml-1 w-11 border-x border-[#999]">Config</button>
      <button className="w-10 border-r border-[#999]">Hide</button>
      <button className="ml-2 w-4 text-[11px]">?</button>
      <time className="ml-auto flex w-[70px] items-center justify-center bg-[#159184] font-['Roboto',sans-serif] text-[12px] font-normal text-[#5cf0cc]">16:37:26</time>
      <span className="flex w-[115px] items-center justify-center bg-[#a6c8f0] font-['Roboto',sans-serif] text-[9px] font-normal">0 viewers, peak of 0</span>
    </div>
  );
}

export default function App() {
  return (
    <div className="flex h-screen flex-col overflow-hidden bg-black pt-4 pb-[17px] font-['Roboto',sans-serif] text-[9px] text-[#222]">
      <header className="flex h-[18px] shrink-0 items-start bg-white pr-4 pl-1.5 text-[#777]">
        <Logo className="-mt-0.5 size-3.5" />
        <h1 className="ml-1 flex-1 text-[10px] leading-3.5">SAM Broadcaster</h1>
        <div className="flex items-center gap-[30px] pt-0.5">
          <button aria-label="Minimize" className="h-px w-2 bg-[#ddd]" />
          <button aria-label="Maximize" className="size-[9px] border border-[#888]" />
          <button aria-label="Close"><svg viewBox="0 0 10 10" className="size-2.5"><path d="m1 1 8 8M9 1 1 9" stroke="currentColor" /></svg></button>
        </div>
      </header>
      <nav className="flex h-[18px] shrink-0 items-center gap-3 bg-white pl-1.5 text-[10px] text-[#666]">
        {['File', 'Player', 'General', 'Window', 'Layout', 'Tools', 'Help'].map((item) => <button key={item}>{item}</button>)}
      </nav>
      <Toolbar />
      <main className="relative flex-1 overflow-hidden bg-[#8f8f8f]">
        <Deck name="Deck A" className="top-0.5 left-px" />
        <Deck name="Deck B" className="top-0.5 left-[295px]" />
        <Playlist />
        <Queue />
        <Encoders />
        <VoiceFx />
        <History />
        <VolumePanel />
        <Clock />
        <SongEditor />
      </main>
    </div>
  );
}
